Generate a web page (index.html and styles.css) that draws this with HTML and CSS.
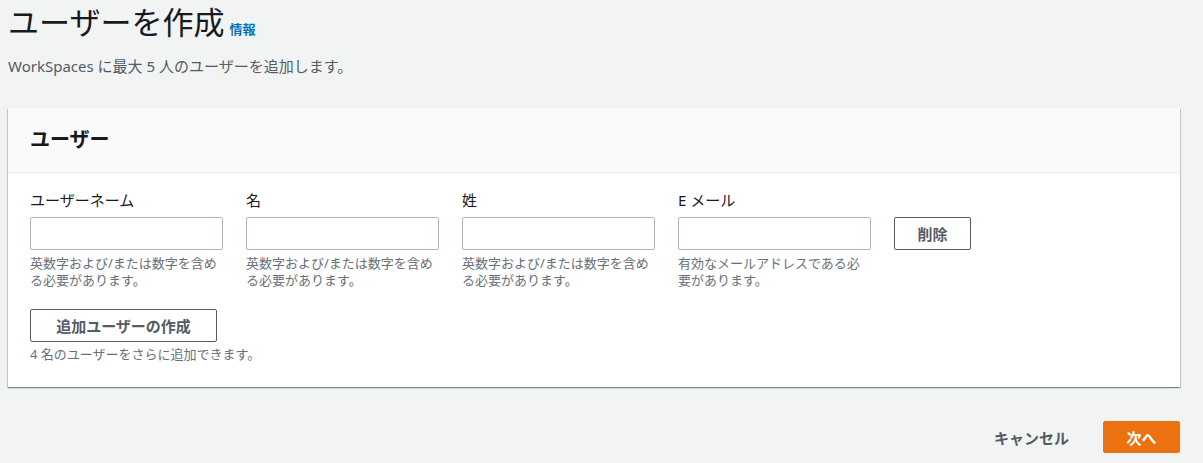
FILE: index.html
```html
<!DOCTYPE html>
<html lang="ja">
<head>
<meta charset="utf-8">
<title>ユーザーを作成</title>
<link rel="stylesheet" href="styles.css">
</head>
<body>
<div class="page">
  <div class="title-row">
    <h1 class="title">ユーザーを作成</h1>
    <a class="info" href="#">情報</a>
  </div>
  <p class="subtitle">WorkSpaces に最大 5 人のユーザーを追加します。</p>

  <section class="card">
    <div class="card-header">
      <h2 class="card-title">ユーザー</h2>
    </div>
    <div class="card-body">
      <div class="user-row">
        <div class="field">
          <label class="label">ユーザーネーム</label>
          <input class="input" type="text">
          <div class="hint">英数字および/または数字を含める必要があります。</div>
        </div>
        <div class="field">
          <label class="label">名</label>
          <input class="input" type="text">
          <div class="hint">英数字および/または数字を含める必要があります。</div>
        </div>
        <div class="field">
          <label class="label">姓</label>
          <input class="input" type="text">
          <div class="hint">英数字および/または数字を含める必要があります。</div>
        </div>
        <div class="field">
          <label class="label">E メール</label>
          <input class="input" type="text">
          <div class="hint">有効なメールアドレスである必要があります。</div>
        </div>
        <div class="field field-action">
          <button class="btn btn-delete">削除</button>
        </div>
      </div>
      <button class="btn btn-add">追加ユーザーの作成</button>
      <div class="hint add-hint">4 名のユーザーをさらに追加できます。</div>
    </div>
  </section>

  <div class="footer">
    <button class="btn-link">キャンセル</button>
    <button class="btn-primary">次へ</button>
  </div>
</div>
</body>
</html>
```

FILE: styles.css
```css
* { box-sizing: border-box; }
html, body {
  margin: 0;
  padding: 0;
  background: #f2f3f3;
  font-family: "Noto Sans", "Noto Sans CJK JP", sans-serif;
  color: #16191f;
}
.page {
  padding: 0 23px 0 8px;
}
.title-row {
  display: flex;
  align-items: baseline;
  gap: 5px;
  padding-top: 2px;
}
.title {
  margin: 0;
  font-size: 31px;
  font-weight: 400;
  line-height: 40px;
  color: #16191f;
}
.info {
  font-size: 13px;
  font-weight: 700;
  color: #0073bb;
  text-decoration: none;
}
.subtitle {
  margin: 14px 0 0;
  font-size: 15px;
  line-height: 20px;
  color: #545b64;
}
.card {
  margin-top: 32px;
  background: #fff;
  box-shadow: 0 1px 1px 0 rgba(0,28,36,.3), 1px 1px 1px 0 rgba(0,28,36,.15), -1px 1px 1px 0 rgba(0,28,36,.15);
}
.card-header {
  background: #fafafa;
  border-bottom: 1px solid #eaeded;
  height: 65px;
  display: flex;
  align-items: center;
  padding: 0 22px;
}
.card-title {
  margin: 0;
  font-size: 20px;
  font-weight: 700;
  line-height: 24px;
}
.card-body {
  padding: 16px 22px 24px;
}
.user-row {
  display: flex;
  gap: 23px;
}
.field {
  width: 193px;
  display: flex;
  flex-direction: column;
}
.field-action {
  width: auto;
  padding-top: 28px;
}
.label {
  font-size: 15px;
  line-height: 22px;
  color: #16191f;
  margin-bottom: 6px;
}
.input {
  height: 33px;
  border: 1px solid #aab7b8;
  border-radius: 2px;
  background: #fff;
}
.hint {
  font-size: 13px;
  line-height: 17px;
  color: #687078;
  margin-top: 5px;
}
.btn {
  font-family: inherit;
  background: #fff;
  border: 1px solid #545b64;
  border-radius: 2px;
  color: #545b64;
  font-weight: 700;
  font-size: 15px;
  height: 33px;
  padding: 0 20px;
  cursor: pointer;
}
.btn-delete {
  width: 77px;
  padding: 0;
}
.btn-add {
  margin-top: 20px;
  width: 187px;
  padding: 0;
}
.add-hint {
  margin-top: 4px;
}
.footer {
  display: flex;
  justify-content: flex-end;
  align-items: center;
  gap: 34px;
  margin-top: 34px;
}
.btn-link {
  font-family: inherit;
  background: none;
  border: none;
  color: #545b64;
  font-weight: 700;
  font-size: 15px;
  padding: 0;
}
.btn-primary {
  font-family: inherit;
  background: #ec7211;
  border: 1px solid #ec7211;
  border-radius: 2px;
  color: #fff;
  font-weight: 700;
  font-size: 15px;
  height: 32px;
  width: 77px;
}
```
